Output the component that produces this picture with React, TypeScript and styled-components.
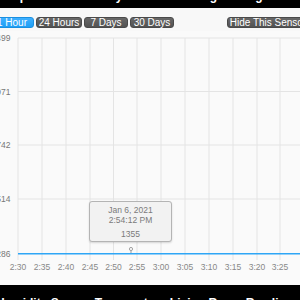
import React from "react";
import styled, { createGlobalStyle } from "styled-components";

const Global = createGlobalStyle`
  html, body { margin: 0; padding: 0; background: #f8f8f8; overflow: hidden; }
  body { font-family: "Liberation Sans", Arial, sans-serif; }
  #root { width: 300px; height: 300px; }
`;

const Page = styled.div`
  width: 300px;
  height: 300px;
  display: flex;
  flex-direction: column;
  overflow: hidden;
  background: #f8f8f8;
`;

const EdgeBar = styled.div<{ $h: number }>`
  height: ${(p) => p.$h}px;
  flex: none;
  background: #000;
  overflow: hidden;
  white-space: nowrap;
`;

const CutText = styled.div<{ $shift: number }>`
  color: #fff;
  font-size: 12px;
  line-height: 12px;
  height: 12px;
  font-weight: bold;
  margin-left: -4px;
  margin-top: ${(p) => p.$shift}px;
`;

const Toolbar = styled.div`
  height: 11px;
  margin-top: 9px;
  display: flex;
  align-items: center;
  gap: 2px;
  margin-left: -10px;
  margin-right: -9px;
  flex: none;
`;

const Button = styled.div<{ $active?: boolean; $w: number }>`
  width: ${(p) => p.$w}px;
  height: 11px;
  flex: none;
  box-sizing: border-box;
  border-radius: 3px;
  display: flex;
  align-items: center;
  justify-content: center;
  color: #fff;
  font-size: 10px;
  line-height: 11px;
  white-space: nowrap;
  background: ${(p) =>
    p.$active ? "linear-gradient(#3eb0ff, #1f9ff5)" : "linear-gradient(#686868, #525252)"};
  border: 1px solid ${(p) => (p.$active ? "#1a8fe0" : "#4a4a4a")};
`;

const Spacer = styled.div`
  flex: 1;
`;

const ChartPanel = styled.div`
  position: relative;
  flex: none;
  height: 254px;
  margin-top: 3px;
  background: #fafafa;
`;

const Tooltip = styled.div`
  position: absolute;
  left: 89px;
  top: 170px;
  width: 83px;
  height: 41px;
  box-sizing: border-box;
  background: #f2f2f2;
  border: 1px solid #b4b4b4;
  border-radius: 3px;
  box-shadow: 0 1px 2px rgba(0, 0, 0, 0.15);
  display: flex;
  flex-direction: column;
  align-items: center;
  padding-top: 4px;
  color: #7a7a7a;
  font-size: 8.5px;
  line-height: 9.5px;
`;

const TipValue = styled.div`
  margin-top: 5px;
`;

const xs = [18, 42, 66, 90, 113.5, 137, 161, 185, 209, 233, 257, 280];
const xLabels = ["2:30", "2:35", "2:40", "2:45", "2:50", "2:55", "3:00", "3:05", "3:10", "3:15", "3:20", "3:25"];
const ys = [38, 91.5, 145, 199, 253.5];
const yLabels = ["1499", "1971", "1742", "1514", "1286"];

function Chart() {
  return (
    <svg width={300} height={254} viewBox="0 31 300 254" style={{ display: "block" }}>
      {ys.map((y) => (
        <line key={y} x1={18} x2={300} y1={y} y2={y} stroke="#e4e4e4" strokeWidth={1} />
      ))}
      {xs.map((x) => (
        <line key={x} x1={x} x2={x} y1={38} y2={260} stroke="#e4e4e4" strokeWidth={1} />
      ))}
      {yLabels.map((l, i) => (
        <text key={l} x={10.5} y={ys[i] + 3} textAnchor="end" fontSize={8.5} fill="#777" fontFamily="Liberation Sans, Arial, sans-serif">
          {l}
        </text>
      ))}
      {xLabels.map((l, i) => (
        <text key={l} x={xs[i]} y={270} textAnchor="middle" fontSize={8.5} fill="#888" fontFamily="Liberation Sans, Arial, sans-serif">
          {l}
        </text>
      ))}
      <line x1={18} x2={300} y1={253.7} y2={253.7} stroke="#2ea6f6" strokeWidth={1.6} />
      <line x1={131} x2={131} y1={250.5} y2={253} stroke="#999" strokeWidth={1} />
      <circle cx={131} cy={249} r={1.6} fill="#fafafa" stroke="#999" strokeWidth={0.9} />
    </svg>
  );
}

export default function App() {
  return (
    <Page>
      <Global />
      <EdgeBar $h={8}>
        <CutText $shift={-10}>Temperature Humidity Sensor Readings Living Room Office Sensor</CutText>
      </EdgeBar>
      <Toolbar>
        <Button $active $w={44}>1 Hour</Button>
        <Button $w={46}>24 Hours</Button>
        <Button $w={44}>7 Days</Button>
        <Button $w={44}>30 Days</Button>
        <Spacer />
        <Button $w={82}>Hide This Sensor</Button>
      </Toolbar>
      <ChartPanel>
        <Chart />
        <Tooltip>
          <div>Jan 6, 2021</div>
          <div>2:54:12 PM</div>
          <TipValue>1355</TipValue>
        </Tooltip>
      </ChartPanel>
      <EdgeBar $h={15}>
        <CutText $shift={12}>Humidity Sensor Temperature Living Room Readings Office</CutText>
      </EdgeBar>
    </Page>
  );
}
